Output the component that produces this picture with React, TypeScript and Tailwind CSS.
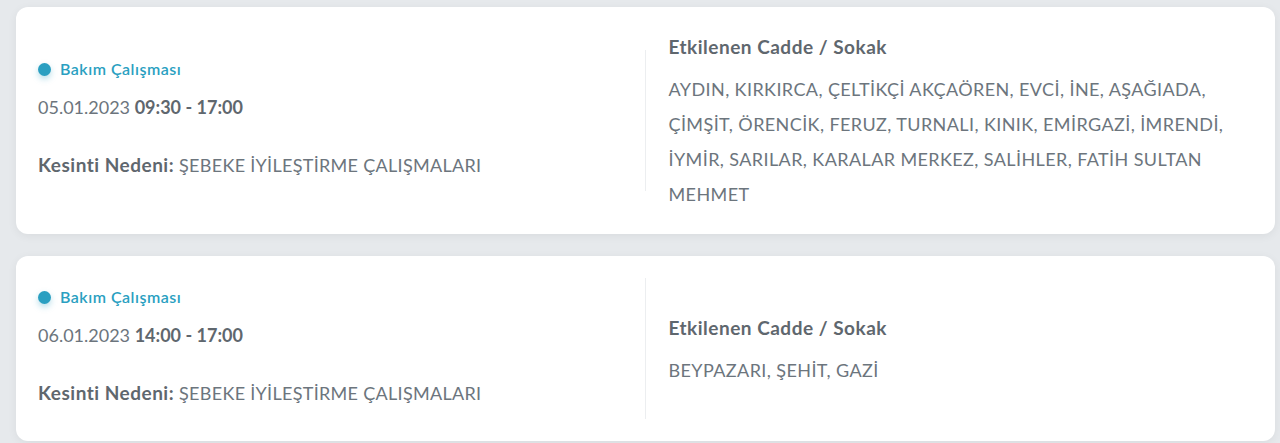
const outages = [
  {
    date: "05.01.2023",
    time: "09:30 - 17:00",
    reason: "ŞEBEKE İYİLEŞTİRME ÇALIŞMALARI",
    streets:
      "AYDIN, KIRKIRCA, ÇELTİKÇİ AKÇAÖREN, EVCİ, İNE, AŞAĞIADA, ÇİMŞİT, ÖRENCİK, FERUZ, TURNALI, KINIK, EMİRGAZİ, İMRENDİ, İYMİR, SARILAR, KARALAR MERKEZ, SALİHLER, FATİH SULTAN MEHMET",
  },
  {
    date: "06.01.2023",
    time: "14:00 - 17:00",
    reason: "ŞEBEKE İYİLEŞTİRME ÇALIŞMALARI",
    streets: "BEYPAZARI, ŞEHİT, GAZİ",
  },
];

function OutageCard({ item }: { item: (typeof outages)[number] }) {
  return (
    <div className="grid grid-cols-2 items-center rounded-xl bg-white py-[22px] shadow-[0_2px_10px_rgba(0,0,0,0.06)]">
      <div className="h-[141px] border-r border-[#eceef0] pl-[22px] pt-[9px]">
        <div className="flex h-5 items-center gap-[9px]">
          <span className="h-[13px] w-[13px] rounded-full bg-[#2a9fc1] shadow-[0_3px_6px_rgba(42,159,193,0.35)]" />
          <span className="text-[16px] font-semibold tracking-[0.5px] text-[#2a9fc1]">Bakım Çalışması</span>
        </div>
        <div className="mt-[14px] h-7 text-[18px] leading-7 text-[#6c757d]">
          {item.date} <span className="font-bold text-[#5f676e]">{item.time}</span>
        </div>
        <div className="mt-[30px] h-7 text-[18px] leading-7 tracking-[0.3px] text-[#6c757d]">
          <span className="text-[19px] font-bold tracking-[0.5px] text-[#5f676e]">Kesinti Nedeni:</span>{" "}
          {item.reason}
        </div>
      </div>
      <div className="pl-[23px] pr-10">
        <div className="text-[19px] font-bold leading-[35px] tracking-[0.5px] text-[#5f676e]">
          Etkilenen Cadde / Sokak
        </div>
        <div className="mt-[8px] text-[18px] leading-[35px] tracking-[0.4px] text-[#6c757d]">{item.streets}</div>
      </div>
    </div>
  );
}

export default function App() {
  return (
    <div
      className="min-h-[443px] bg-[#e6e9ec] pl-4 pr-[5px] pt-[7px]"
      style={{ fontFamily: "Lato, 'Noto Sans', sans-serif" }}
    >
      <div className="flex flex-col gap-[22px]">
        {outages.map((o) => (
          <OutageCard key={o.date} item={o} />
        ))}
      </div>
    </div>
  );
}
